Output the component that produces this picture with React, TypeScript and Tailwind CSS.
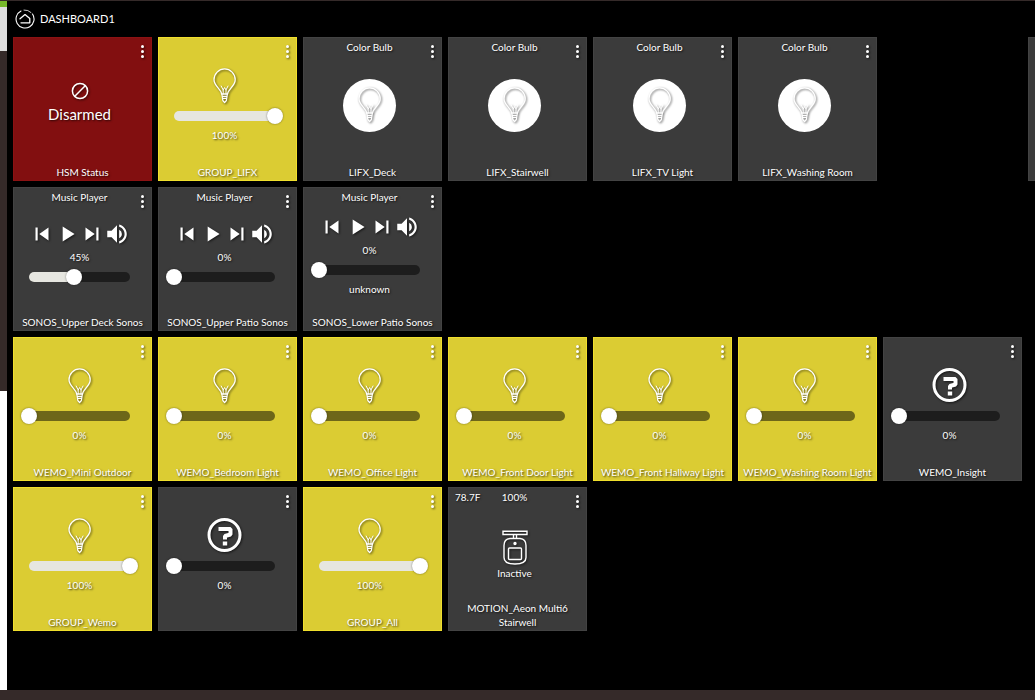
import React from 'react';
import { MdPlayArrow, MdSkipNext, MdSkipPrevious, MdVolumeUp } from 'react-icons/md';

type Tile = {
  kind: 'hsm' | 'dimmer' | 'color' | 'music' | 'motion' | 'blank';
  name?: string;
  level?: number;
  icon?: 'bulb' | 'help';
  track?: string;
  place?: string;
};

const tiles: Tile[] = [
  { kind: 'hsm', name: 'HSM Status' },
  { kind: 'dimmer', name: 'GROUP_LIFX', level: 100, icon: 'bulb' },
  { kind: 'color', name: 'LIFX_Deck' },
  { kind: 'color', name: 'LIFX_Stairwell' },
  { kind: 'color', name: 'LIFX_TV Light' },
  { kind: 'color', name: 'LIFX_Washing Room' },
  { kind: 'blank', place: 'col-start-8' },
  { kind: 'music', name: 'SONOS_Upper Deck Sonos', level: 45, place: 'col-start-1' },
  { kind: 'music', name: 'SONOS_Upper Patio Sonos', level: 0 },
  { kind: 'music', name: 'SONOS_Lower Patio Sonos', level: 0, track: 'unknown' },
  { kind: 'dimmer', name: 'WEMO_Mini Outdoor', level: 0, icon: 'bulb', place: 'col-start-1' },
  { kind: 'dimmer', name: 'WEMO_Bedroom Light', level: 0, icon: 'bulb' },
  { kind: 'dimmer', name: 'WEMO_Office Light', level: 0, icon: 'bulb' },
  { kind: 'dimmer', name: 'WEMO_Front Door Light', level: 0, icon: 'bulb' },
  { kind: 'dimmer', name: 'WEMO_Front Hallway Light', level: 0, icon: 'bulb' },
  { kind: 'dimmer', name: 'WEMO_Washing Room Light', level: 0, icon: 'bulb' },
  { kind: 'dimmer', name: 'WEMO_Insight', level: 0, icon: 'help' },
  { kind: 'dimmer', name: 'GROUP_Wemo', level: 100, icon: 'bulb', place: 'col-start-1' },
  { kind: 'dimmer', level: 0, icon: 'help' },
  { kind: 'dimmer', name: 'GROUP_All', level: 100, icon: 'bulb' },
  { kind: 'motion', name: 'MOTION_Aeon Multi6 Stairwell' },
];

const shadow = 'drop-shadow-[1px_1px_1px_rgba(0,0,0,0.6)]';

function Logo() {
  return (
    <svg viewBox="0 0 20 20" className="h-5 w-5" fill="none" stroke="white" strokeLinecap="round" strokeLinejoin="round">
      <path d="M6 2 A9 9 0 1 0 17.5 5" strokeWidth="1.1" />
      <path d="M9 1 A9 9 0 0 1 16 3.5" strokeWidth="0.8" />
      <path d="M5 9.8 L10 5.6 L14.8 9.6 V13.8 H6" strokeWidth="1.3" />
    </svg>
  );
}

function Bulb() {
  return (
    <svg viewBox="0 0 24 36" className={`h-9 w-6 ${shadow}`} fill="none" stroke="white" strokeWidth="1.3" strokeLinejoin="round" strokeLinecap="round">
      <path d="M8.6 26 C8 21 1 18 1 11.8 A10.6 10.9 0 0 1 22.2 11.8 C22.2 18 15.2 21 14.6 26 Z" />
      <path d="M8.2 18 L10.2 22 V26 M15 18 L13 22 V26 M10.2 22 L11.6 19.5 L13 22" strokeWidth="1" />
      <path d="M9 28.3 H14.2 M9.6 30.4 H13.6 M8.8 26 L9.8 32.5 L11.6 34.6 L13.4 32.5 L14.4 26" strokeWidth="1.2" />
    </svg>
  );
}

function Help() {
  return (
    <svg viewBox="0 0 36 36" className={`h-9 w-9 ${shadow}`} fill="none" stroke="white">
      <circle cx="17.5" cy="17" r="15.5" strokeWidth="3" />
      <path d="M11.5 11 H23.5 V16.5 L18 18 V21.5" strokeWidth="4" strokeLinejoin="bevel" />
      <path d="M18 23.5 V27.5" strokeWidth="4.4" />
    </svg>
  );
}

function Motion() {
  return (
    <svg viewBox="0 0 26 36" className={`h-9 w-[26px] ${shadow}`} fill="none" stroke="white" strokeWidth="1.4">
      <path d="M1 1.2 H25 V4.5 H1 Z M11.5 4.5 V8.5 M14.5 4.5 V8.5" />
      <path d="M8 8.5 H18 Q24 9 24 15.5 V27.5 Q24 34 13 34 Q2 34 2 27.5 V15.5 Q2 9 8 8.5 Z" />
      <rect x="6.5" y="18" width="13" height="11.5" rx="1" />
      <circle cx="13" cy="13.5" r="1" fill="white" />
    </svg>
  );
}

function Slider({ value, label }: { value: number; label: string }) {
  return (
    <div className="relative flex h-4 w-[117px] items-center px-2">
      <div className="h-2.5 w-full overflow-hidden rounded-full bg-black/50">
        <div className="h-full bg-[#e6e6e0]" style={{ width: `${value}%` }} />
      </div>
      <input
        type="range"
        defaultValue={value}
        aria-label={label}
        className="absolute inset-0 m-0 h-4 w-full cursor-pointer appearance-none bg-transparent [&::-webkit-slider-thumb]:h-4 [&::-webkit-slider-thumb]:w-4 [&::-webkit-slider-thumb]:appearance-none [&::-webkit-slider-thumb]:rounded-full [&::-webkit-slider-thumb]:bg-white [&::-webkit-slider-thumb]:shadow-[0_0_2px_rgba(0,0,0,0.5)]"
      />
    </div>
  );
}

function PlayerButtons() {
  const buttons = [
    { icon: MdSkipPrevious, label: 'Previous' },
    { icon: MdPlayArrow, label: 'Play' },
    { icon: MdSkipNext, label: 'Next' },
    { icon: MdVolumeUp, label: 'Mute' },
  ];
  return (
    <div className="flex">
      {buttons.map((button) => (
        <button key={button.label} aria-label={button.label} className="flex h-6 w-[25px] items-center justify-center">
          <button.icon className={`h-[26px] w-[26px] shrink-0 ${shadow}`} />
        </button>
      ))}
    </div>
  );
}

function TileBody({ tile }: { tile: Tile }) {
  const level = tile.level ?? 0;
  const label = `${tile.name ?? 'Device'} level`;

  switch (tile.kind) {
    case 'hsm':
      return (
        <div className="flex flex-col items-center pb-1">
          <svg viewBox="0 0 18 18" className={`h-[18px] w-[18px] ${shadow}`} fill="none" stroke="white" strokeWidth="1.5">
            <circle cx="9" cy="9" r="7.6" />
            <path d="M3.8 14.2 L14.2 3.8" />
          </svg>
          <span className="mt-1 text-[15px] leading-5">Disarmed</span>
        </div>
      );
    case 'dimmer':
      return (
        <>
          {tile.icon === 'help' ? <Help /> : <Bulb />}
          <div className="mt-1">
            <Slider value={level} label={label} />
          </div>
          <span className="mt-1">{level}%</span>
        </>
      );
    case 'color':
      return (
        <button aria-label={`${tile.name} color`} className="flex h-[53px] w-[53px] items-center justify-center rounded-full bg-white">
          <Bulb />
        </button>
      );
    case 'music':
      return (
        <>
          <PlayerButtons />
          <span className="mt-1 mb-[5px]">{level}%</span>
          <div className="mb-1">
            <Slider value={level} label={label} />
          </div>
          {tile.track && <span>{tile.track}</span>}
        </>
      );
    case 'motion':
      return (
        <>
          <Motion />
          <span>Inactive</span>
        </>
      );
    default:
      return null;
  }
}

function tileColor(tile: Tile) {
  if (tile.kind === 'hsm') return 'bg-[#820f10] border-[#8c1213]';
  if (tile.icon === 'bulb') return 'bg-[#dbcc33] border-[#f0df2c]';
  return 'bg-[#3b3b3b] border-[#434343]';
}

function DeviceTile({ tile }: { tile: Tile }) {
  return (
    <section className={`relative flex h-36 flex-col border ${tileColor(tile)} ${tile.place ?? ''}`}>
      <div className="flex h-[22px] justify-center pr-1.5 leading-[18px]">
        {tile.kind === 'color' && 'Color Bulb'}
        {tile.kind === 'music' && 'Music Player'}
        {tile.kind === 'motion' && (
          <div className="grid flex-1 grid-cols-3 text-center">
            <span className="pl-1.5 text-left">78.7F</span>
            <span>100%</span>
          </div>
        )}
      </div>
      <div className="flex flex-1 flex-col items-center justify-center pr-1.5">
        <TileBody tile={tile} />
      </div>
      <h2 className="flex h-[30px] flex-col justify-end px-1 pb-px text-center">{tile.name}</h2>
      {tile.kind !== 'blank' && (
        <button aria-label="Tile options" className={`absolute top-1 right-1 flex h-[18px] w-2.5 flex-col items-center justify-center gap-0.5 ${shadow}`}>
          <span className="h-[3px] w-[3px] rounded-full bg-white" />
          <span className="h-[3px] w-[3px] rounded-full bg-white" />
          <span className="h-[3px] w-[3px] rounded-full bg-white" />
        </button>
      )}
    </section>
  );
}

function App() {
  return (
    <div className="flex min-h-screen flex-col overflow-hidden border-t border-b-10 border-t-[#352a29] border-b-[#352a29] bg-black font-['Lato',sans-serif] text-[10px] leading-[14px] text-white">
      <div className="flex flex-1">
        {/* Page behind the dashboard */}
        <div className="flex w-[7px] shrink-0 flex-col bg-white">
          <div className="h-1.5 bg-[#76b82a]" />
          <div className="h-11 bg-[#dddddd]" />
          <div className="h-[340px] bg-[#352a29]" />
        </div>

        <main className="min-w-0 flex-1 overflow-hidden pl-1.5">
          <header className="flex h-9 items-center gap-[5px] pl-0.5">
            <Logo />
            <h1 className="text-[11px]">DASHBOARD1</h1>
          </header>
          <div className="grid grid-cols-[repeat(8,139px)] gap-1.5 [text-shadow:1px_1px_2px_rgba(0,0,0,0.7)]">
            {tiles.map((tile, index) => (
              <DeviceTile key={index} tile={tile} />
            ))}
          </div>
        </main>
      </div>
    </div>
  );
}

export default App;
